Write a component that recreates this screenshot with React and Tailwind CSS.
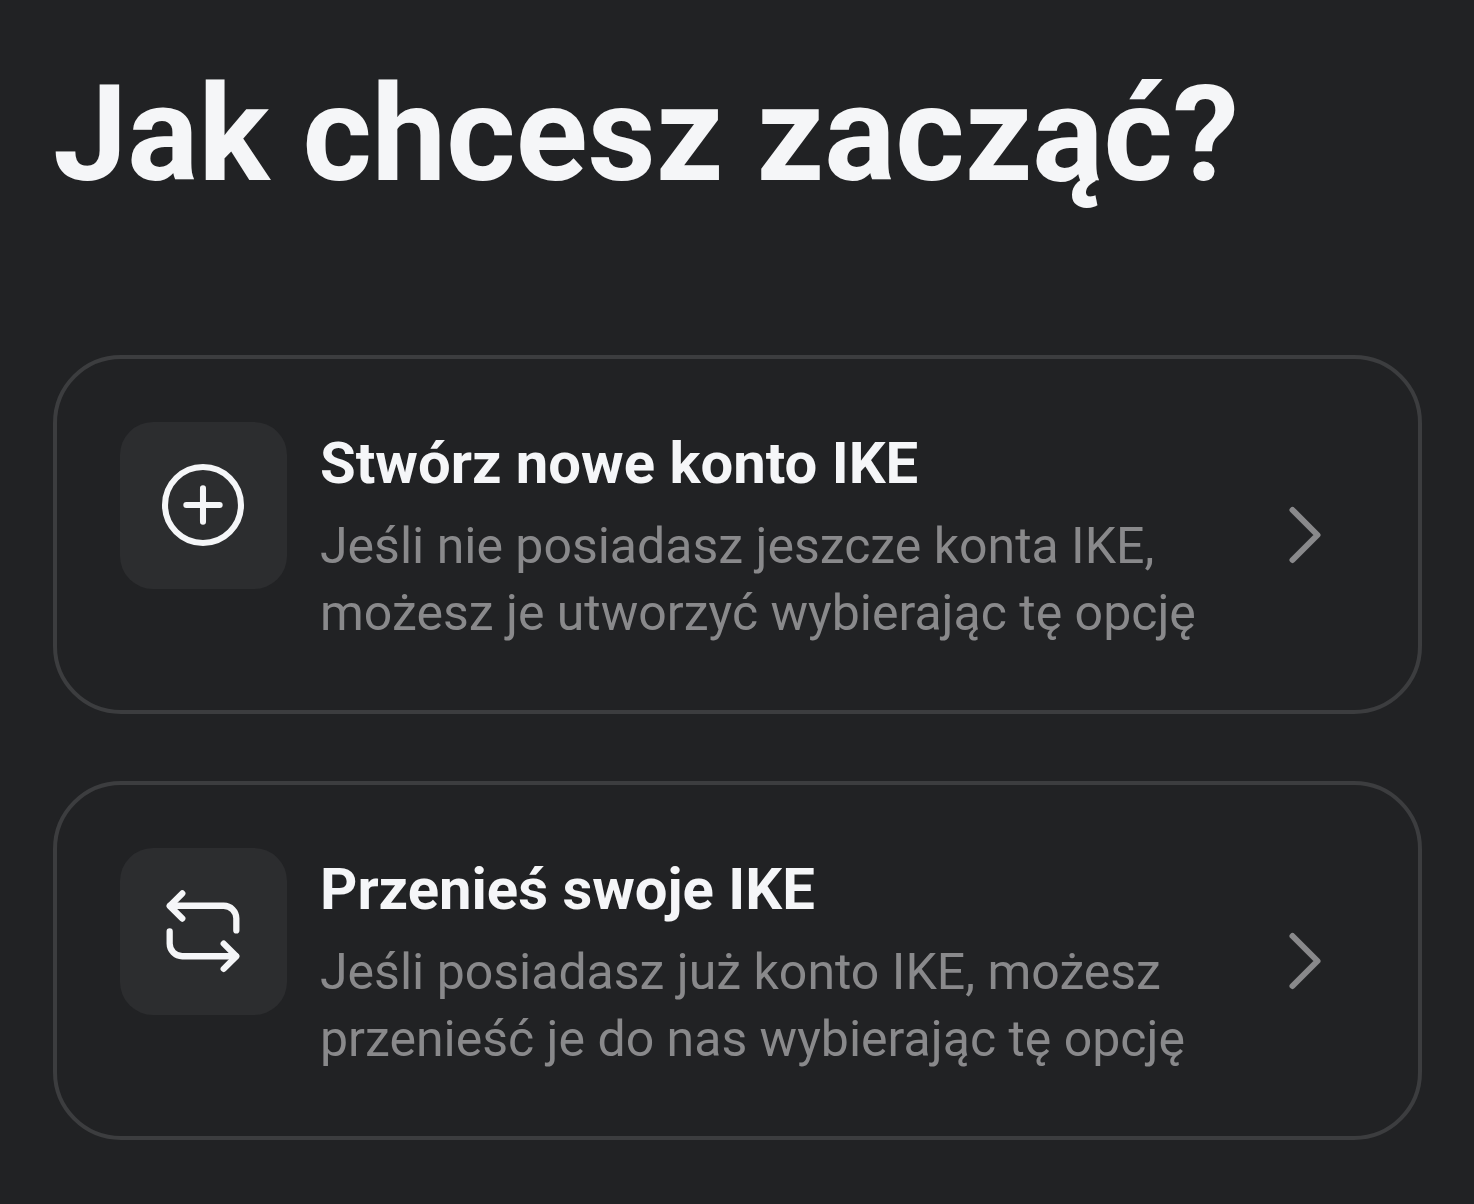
import React from 'react';

function PlusCircleIcon() {
  return (
    <svg viewBox="0 0 100 100" className="w-[101px] h-[101px]" fill="none" stroke="currentColor" strokeWidth="6" strokeLinecap="round" strokeLinejoin="round" aria-hidden="true">
      <circle cx="49.5" cy="49.5" r="37.6" />
      <path d="M49.5 33v33M33 49.5h33" />
    </svg>
  );
}

function TransferIcon() {
  return (
    <svg viewBox="0 0 100 100" className="w-[101px] h-[101px]" fill="none" stroke="currentColor" strokeWidth="6.2" strokeLinecap="round" strokeLinejoin="round" aria-hidden="true">
      <path d="M82.5 49V37a12.5 12.5 0 0 0-12.5-12.5H17" />
      <path d="M29 12.3L16.5 24.7l12.5 12.5" />
      <path d="M16.5 50v12a12.5 12.5 0 0 0 12.5 12.5h53" />
      <path d="M70 62L82.5 74.5l-12.5 12.5" />
    </svg>
  );
}

function ChevronIcon() {
  return (
    <svg viewBox="0 0 100 100" className="w-25 h-25 shrink-0 text-[#89898b]" fill="none" stroke="currentColor" strokeWidth="6" strokeLinecap="round" strokeLinejoin="round" aria-hidden="true">
      <path d="M37.5 25l25 25-25 25" />
    </svg>
  );
}

const options = [
  {
    id: 'create',
    icon: PlusCircleIcon,
    title: 'Stwórz nowe konto IKE',
    description: 'Jeśli nie posiadasz jeszcze konta IKE, możesz je utworzyć wybierając tę opcję',
  },
  {
    id: 'transfer',
    icon: TransferIcon,
    title: 'Przenieś swoje IKE',
    description: 'Jeśli posiadasz już konto IKE, możesz przenieść je do nas wybierając tę opcję',
  },
];

function OptionCard({ option }) {
  const Icon = option.icon;

  return (
    <button
      type="button"
      className="w-full flex items-center text-left border-4 border-[#3c3d3f] rounded-[68px] p-[63px]"
    >
      <span className="flex flex-1 items-start gap-[33px]">
        <span className="w-[167px] h-[167px] shrink-0 flex items-center justify-center rounded-[33px] bg-[#2c2d2f] text-[#f5f6f8]">
          <Icon />
        </span>
        <span className="flex-1 flex flex-col gap-3 pt-[3px]">
          <span className="text-[58px] leading-[76px] font-bold text-[#f5f6f8]">{option.title}</span>
          <span className="text-[50px] leading-[67px] text-[#89898b]">{option.description}</span>
        </span>
      </span>
      <ChevronIcon />
    </button>
  );
}

function App() {
  return (
    <main className="min-h-screen bg-[#212224] font-['Roboto',sans-serif] pl-[53px] pr-[52px] pt-[55px] pb-16">
      <h1 className="text-[133px] leading-[160px] font-bold text-[#f5f6f8]">Jak chcesz zacząć?</h1>
      <div className="mt-[140px] flex flex-col gap-[67px]">
        {options.map((option) => (
          <OptionCard key={option.id} option={option} />
        ))}
      </div>
    </main>
  );
}

export default App;
